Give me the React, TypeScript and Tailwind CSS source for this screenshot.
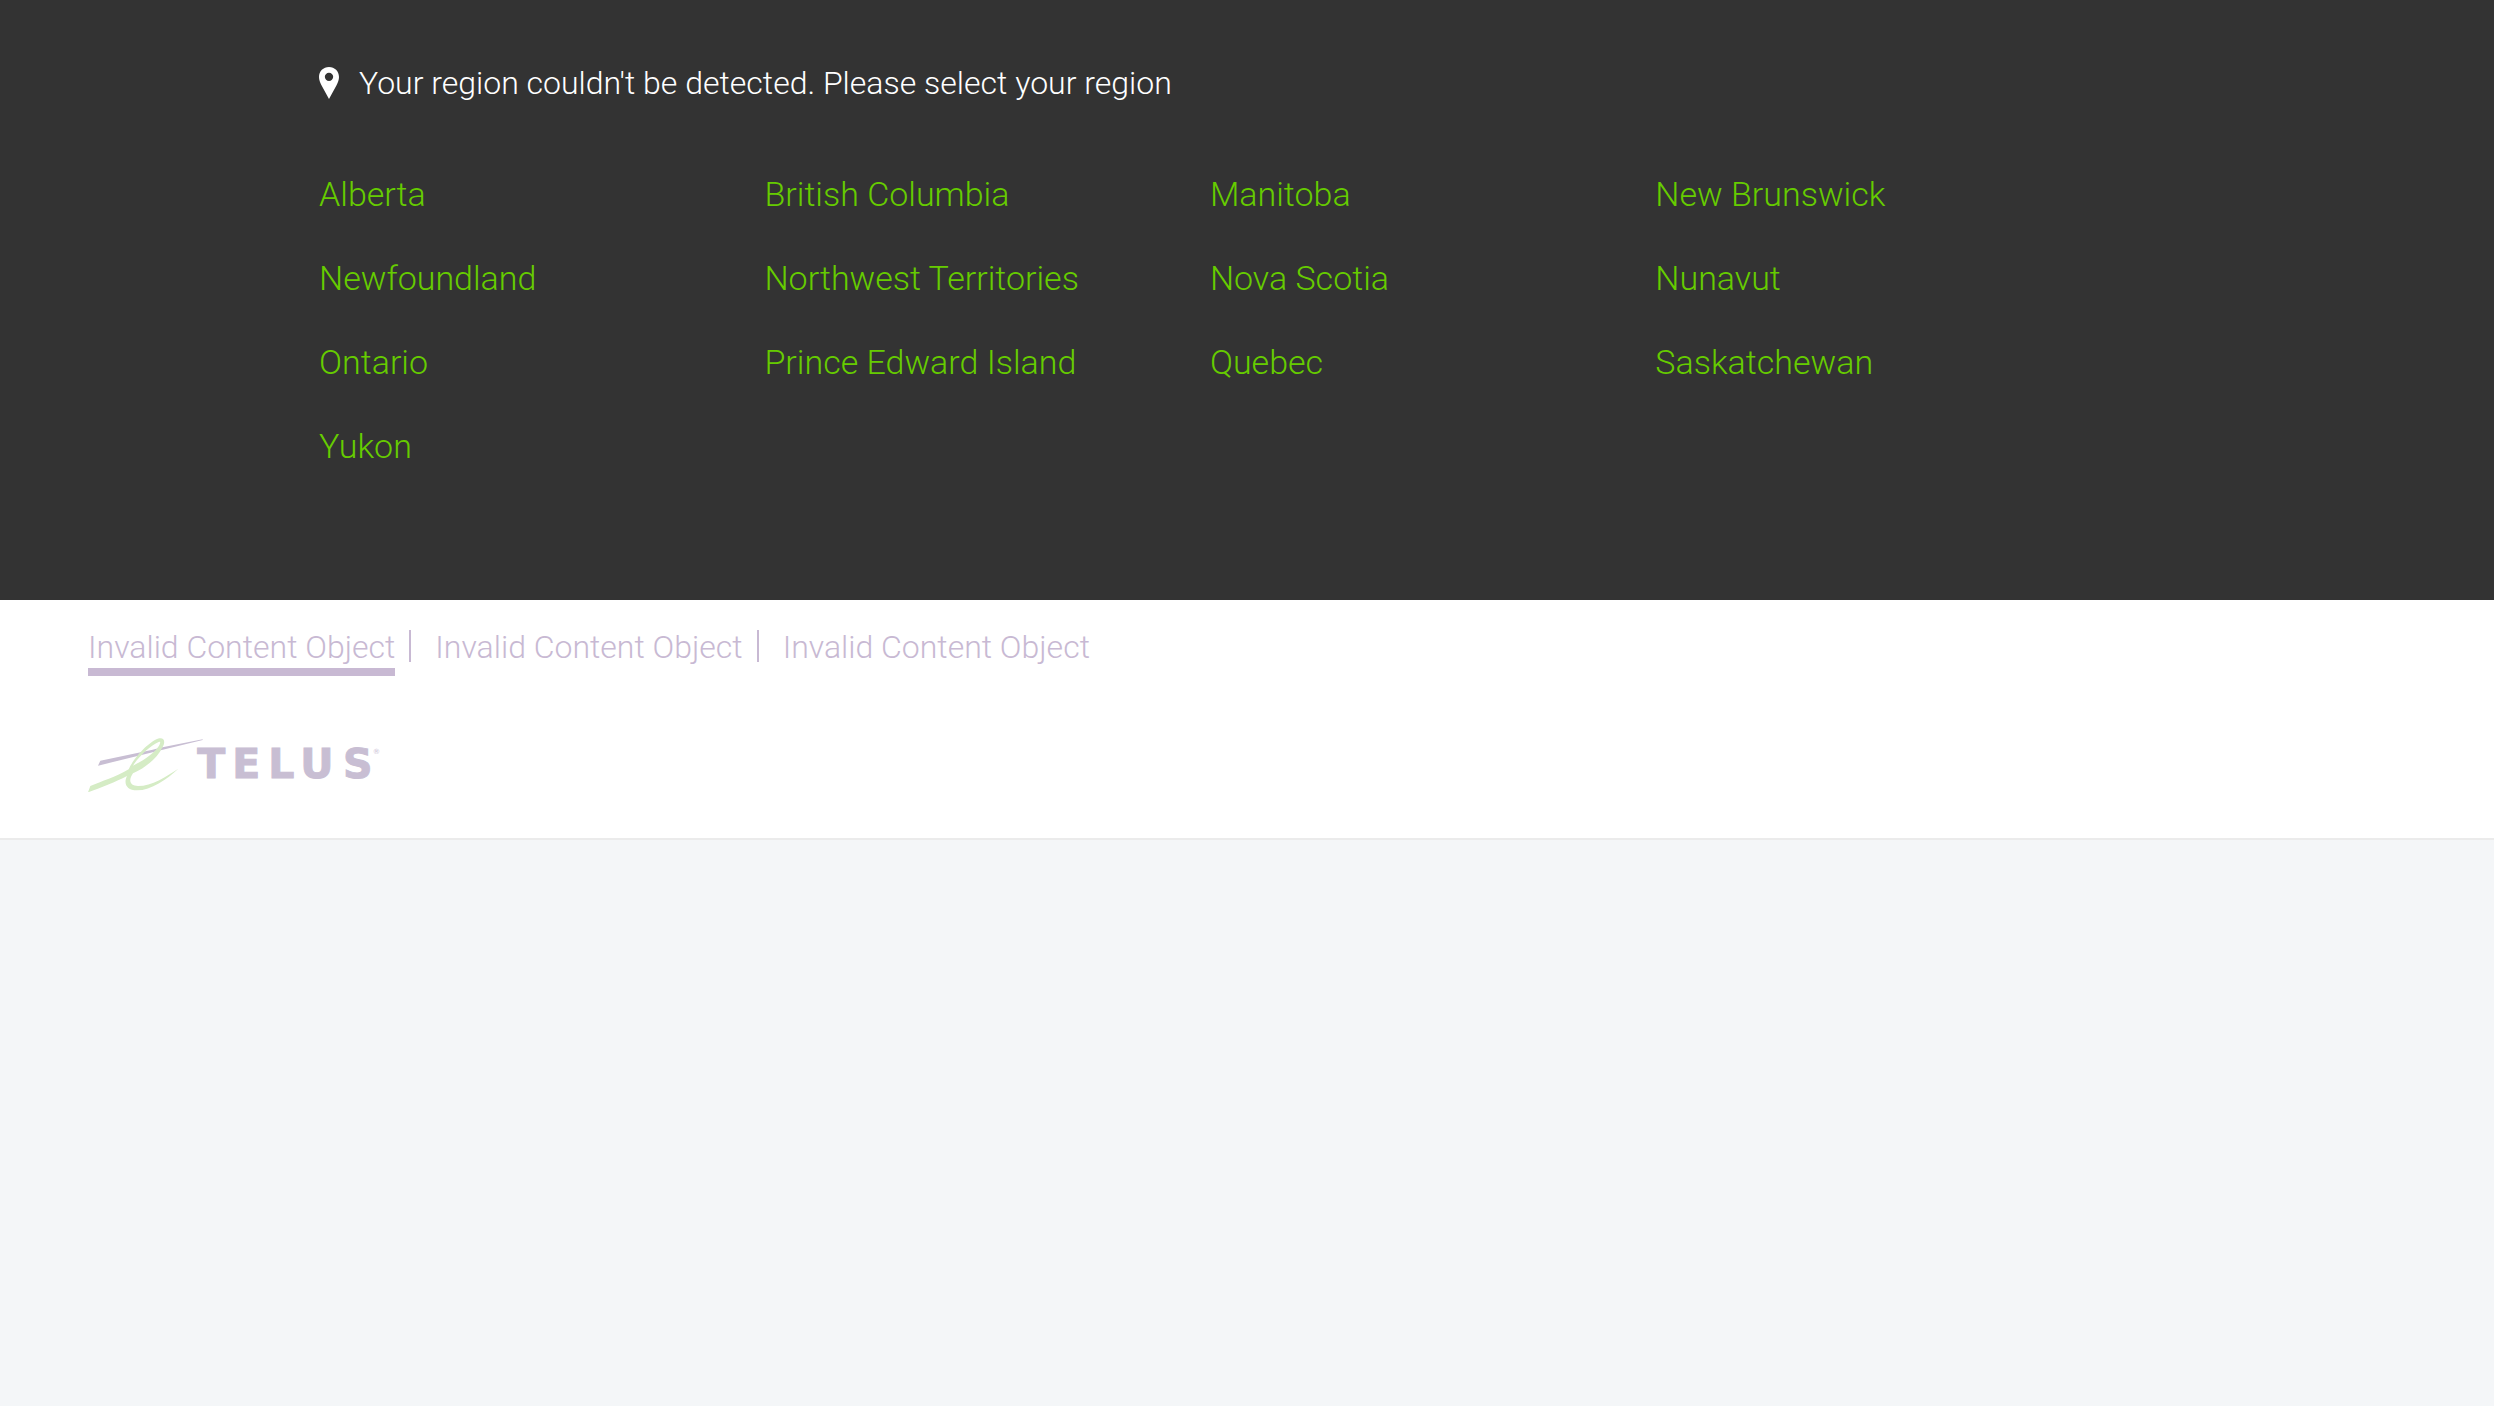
const regions = [
  'Alberta',
  'British Columbia',
  'Manitoba',
  'New Brunswick',
  'Newfoundland',
  'Northwest Territories',
  'Nova Scotia',
  'Nunavut',
  'Ontario',
  'Prince Edward Island',
  'Quebec',
  'Saskatchewan',
  'Yukon',
];

const tabs = [
  { label: 'Invalid Content Object', active: true },
  { label: 'Invalid Content Object', active: false },
  { label: 'Invalid Content Object', active: false },
];

function PinIcon() {
  return (
    <svg className="h-8 w-5 shrink-0" viewBox="0 0 60 96" fill="#fff" aria-hidden="true">
      <path
        fillRule="evenodd"
        d="M30 0C13 0 0 13 0 30c0 8 3 16 7 24l23 42 23-42c4-8 7-16 7-24C60 13 47 0 30 0Zm0 17a12.500 12.500 0 1 1 0 25 12.500 12.500 0 0 1 0-25Z"
      />
    </svg>
  );
}

function TelusLogo() {
  return (
    <svg className="block h-[54px] w-[292px]" viewBox="54 443 876 162" role="img" aria-label="TELUS">
      <path fill="#c8bed3" d="M91 511 L248 478 L270 472 L398 447 L398 449 L266 481 L248 486 L84 526 Z" />
      <path
        fill="#d5ecc5"
        fillRule="evenodd"
        d="M61 587 C95 573 137 560 176 537 C189 506 237 452 268 444 C284 442 286 455 278 470 C261 506 224 533 189 549 C174 570 180 587 204 587 C246 587 288 559 325 535 C290 567 244 600 201 600 C169 600 160 579 171 557 C137 575 91 593 54 606 Z M189 526 C224 508 251 490 267 466 C272 458 272 452 266 455 C242 466 207 497 189 526 Z"
      />
      <g fill="#c8bed3" fontFamily="DejaVu Sans, sans-serif" fontWeight="700">
        <text x="382 487 595 691 819" y="562" fontSize="123" stroke="#c8bed3" strokeWidth="3">
          TELUS
        </text>
        <text x="908" y="490" fontSize="22" fontWeight="400">
          ®
        </text>
      </g>
    </svg>
  );
}

export default function App() {
  return (
    <div className="min-h-screen bg-[#f4f6f8] font-['Roboto','Liberation_Sans',sans-serif] font-light">
      <section className="bg-[#333] px-8 pt-[63px] pb-[134px]">
        <div className="mx-auto max-w-[1856px]">
          <h1 className="flex items-center gap-5 text-[32px] leading-[40px] text-white">
            <PinIcon />
            Your region couldn't be detected. Please select your region
          </h1>
          <ul className="mt-[71px] grid grid-cols-[repeat(4,24%)] gap-y-11 text-[34px] leading-[40px] text-[#6c0]">
            {regions.map((region) => (
              <li key={region}>
                <a href="#" className="hover:underline">
                  {region}
                </a>
              </li>
            ))}
          </ul>
        </div>
      </section>

      <header className="border-b-2 border-[#ebebeb] bg-white px-[88px] pt-[26px] pb-[46px]">
        <nav>
          <ul className="flex items-start text-[32px] leading-[42px] text-[#c8b9d3]">
            {tabs.map((tab, i) => (
              <li key={i} className="flex">
                {i > 0 && <span className="mt-1 mr-6 ml-3.5 h-8 w-0.5 bg-[#c8b9d3]" />}
                <a
                  href="#"
                  aria-current={tab.active ? 'page' : undefined}
                  className={tab.active ? 'border-b-8 border-[#c8b9d3]' : 'border-b-8 border-transparent'}
                >
                  {tab.label}
                </a>
              </li>
            ))}
          </ul>
        </nav>
        <a href="#" className="mt-[62px] inline-block align-top">
          <TelusLogo />
        </a>
      </header>
    </div>
  );
}
